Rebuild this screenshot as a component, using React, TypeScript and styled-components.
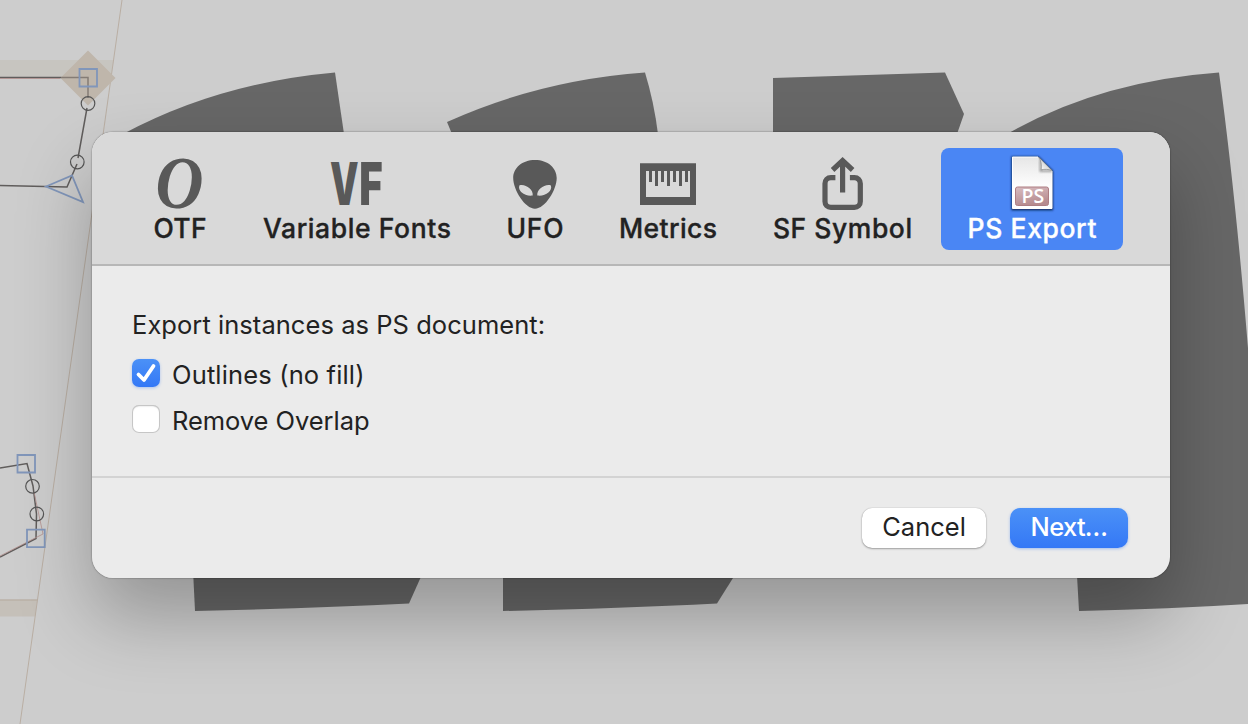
import React, { useState } from "react";
import styled, { createGlobalStyle, css } from "styled-components";

const GlobalStyle = createGlobalStyle`
  * { box-sizing: border-box; }
  body {
    margin: 0;
    overflow: hidden;
    background: #cdcdcd;
    font-family: Inter, "Liberation Sans", sans-serif;
    color: #222;
  }
  button { font: inherit; border: 0; padding: 0; background: none; color: inherit; }
`;

const Editor = styled.main`
  position: relative;
  width: 1248px;
  height: 724px;
  overflow: hidden;
  padding: 132px 78px 0 92px;
`;

const Canvas = styled.svg`
  position: absolute;
  inset: 0;
`;

const Sheet = styled.section`
  position: relative;
  display: flex;
  flex-direction: column;
  height: 446px;
  border-radius: 21px;
  overflow: hidden;
  background: #ebebeb;
`;

const SheetShadow = styled.div`
  border-radius: 21px;
  position: relative;
  box-shadow: 0 0 1.5px rgba(0, 0, 0, 0.65), 0 38px 74px rgba(0, 0, 0, 0.28);
`;

const Toolbar = styled.nav`
  display: flex;
  gap: 2px;
  height: 134px;
  padding: 16px 0 0 34px;
  background: #d9d9d9;
  border-bottom: 2px solid #b7b7b7;
`;

const ToolButton = styled.button<{ $width: number; $active: boolean }>`
  display: flex;
  flex-direction: column;
  align-items: center;
  flex: none;
  width: ${(p) => p.$width}px;
  height: 102px;
  padding-top: 4px;
  border-radius: 8px;
  ${(p) =>
    p.$active &&
    css`
      background: #4a86f4;
      color: #fff;
    `}
`;

const ToolIcon = styled.svg`
  display: block;
  flex: none;
  overflow: visible;
  fill: #595959;
`;

const ToolLabel = styled.span<{ $spacing: number }>`
  font-size: 26.5px;
  line-height: 33px;
  font-weight: 500;
  -webkit-text-stroke: 0.35px currentColor;
  white-space: nowrap;
  letter-spacing: ${(p) => p.$spacing}px;
  margin-right: ${(p) => -p.$spacing}px;
`;

const Options = styled.div`
  display: flex;
  flex-direction: column;
  height: 212px;
  padding: 43px 40px 0;
  border-bottom: 2px solid #d3d3d3;
`;

const Heading = styled.div`
  font-size: 25.5px;
  line-height: 32px;
  letter-spacing: 0.05px;
  margin-bottom: 18px;
  white-space: nowrap;
`;

const Option = styled.label<{ $spacing: number }>`
  display: flex;
  align-items: center;
  gap: 12px;
  height: 30px;
  margin-bottom: 16px;
  font-size: 25.5px;
  letter-spacing: ${(p) => p.$spacing}px;
`;

const CheckBox = styled.button<{ $checked: boolean }>`
  display: block;
  width: 28px;
  height: 28px;
  margin-top: -2px;
  border-radius: 7px;
  ${(p) =>
    p.$checked
      ? css`
          background: linear-gradient(#4b91f7, #3478f6);
          box-shadow: 0 1px 3px rgba(52, 120, 246, 0.35);
        `
      : css`
          background: #fff;
          box-shadow: inset 0 0 0 1px #c6c6c6, inset 0 1px 2px rgba(0, 0, 0, 0.2);
        `}
`;

const Footer = styled.footer`
  display: flex;
  justify-content: flex-end;
  gap: 24px;
  padding: 30px 42px 0 0;
`;

const PushButton = styled.button<{ $primary?: boolean }>`
  width: ${(p) => (p.$primary ? 118 : 124)}px;
  height: 40px;
  border-radius: 10px;
  font-size: 25.5px;
  line-height: 38px;
  padding-bottom: 2px;
  background: #fff;
  box-shadow: 0 0 1px rgba(0, 0, 0, 0.35), 0 1px 2px rgba(0, 0, 0, 0.3);
  ${(p) =>
    p.$primary &&
    css`
      color: #fff;
      font-weight: 500;
      letter-spacing: -0.7px;
      background: linear-gradient(#4b91f7, #3478f6);
      box-shadow: 0 1px 3px rgba(52, 120, 246, 0.4);
    `}
`;

const OtfIcon = () => (
  <ToolIcon width="64" height="60" viewBox="0 0 64 60">
    <text transform="translate(7.5 55.8) scale(0.91 1)" fontFamily="Liberation Serif, serif" fontWeight="700" fontStyle="italic" fontSize="73">O</text>
  </ToolIcon>
);

const VfIcon = () => (
  <ToolIcon width="64" height="60" viewBox="0 0 64 60" fontFamily="Inter, sans-serif" fontWeight="900" fontSize="59">
    <text transform="translate(5 53.3) scale(0.61 1)">V</text>
    <text transform="translate(34.2 53.3) scale(0.68 1)">F</text>
  </ToolIcon>
);

const UfoIcon = () => (
  <ToolIcon width="64" height="60" viewBox="0 0 64 60">
    <path
      fillRule="evenodd"
      d="M32 8C45 8 53.7 16 53.7 26C53.7 38 42 56.7 32 56.7C22 56.7 10.2 38 10.2 26C10.2 16 19 8 32 8ZM16.3 33.5C14.5 39 22 44.8 29.7 43.6C30.6 37.5 22 31.5 16.3 33.5ZM47.9 33.5C49.7 39 42.2 44.8 34.3 43.6C33.5 37.5 42.2 31.5 47.9 33.5Z"
    />
  </ToolIcon>
);

const MetricsIcon = () => (
  <ToolIcon width="64" height="60" viewBox="0 0 64 60">
    <path fillRule="evenodd" d="M4 11.3H60V53H4ZM10 19V45H54V19Z" />
    <path d="M13 19h3v11h-3zM19 19h3v15h-3zM25 19h3v11h-3zM31 19h3v15h-3zM37 19h3v11h-3zM43 19h3v15h-3zM49 19h3v11h-3z" />
  </ToolIcon>
);

const ShareIcon = () => (
  <ToolIcon width="64" height="60" viewBox="0 0 64 60">
    <g fill="none" stroke="#595959" strokeWidth="5.2" transform="translate(-0.6 0)">
      <path d="M25 25.7H20.5C17 25.7 14.6 28.1 14.6 31.6V49.5C14.6 53 17 55.4 20.5 55.4H44C47.5 55.4 49.9 53 49.9 49.5V31.6C49.9 28.1 47.5 25.7 44 25.7H39.5" />
      <path d="M32.2 40.5V8.5M22.2 18L32.2 8.5L42.2 18" />
    </g>
  </ToolIcon>
);

const PsIcon = () => (
  <ToolIcon width="64" height="60" viewBox="0 0 64 60">
    <defs>
      <linearGradient id="paper" x1="0" y1="0" x2="0" y2="1">
        <stop offset="0" stopColor="#e6e6e6" />
        <stop offset="0.6" stopColor="#fff" />
      </linearGradient>
      <linearGradient id="plate" x1="0" y1="0" x2="0.3" y2="1">
        <stop offset="0" stopColor="#d8bcc0" />
        <stop offset="1" stopColor="#b68b8f" />
      </linearGradient>
      <linearGradient id="fold" x1="0" y1="1" x2="1" y2="0">
        <stop offset="0.1" stopColor="#fff" />
        <stop offset="0.5" stopColor="#d8d8d8" />
      </linearGradient>
      <filter id="soft" x="-20%" y="-20%" width="140%" height="140%">
        <feGaussianBlur stdDeviation="0.9" />
      </filter>
    </defs>
    <path d="M11.5 4.5H38.5L53 19V58.3H11.5Z" fill="#0c2350" filter="url(#soft)" />
    <path d="M12.5 5H38L52 19V56.5H12.5Z" fill="url(#paper)" stroke="#fff" />
    <path d="M40.5 7.5V19H52" fill="none" stroke="#666" strokeWidth="2" opacity="0.6" filter="url(#soft)" />
    <path d="M38.5 5L52 18.5C48.5 17.2 44.5 17 41.2 17.8C41.8 13 41.2 8.5 38.5 5Z" fill="url(#fold)" stroke="#7b7b7b" strokeWidth="0.6" />
    <rect x="15.5" y="35" width="33" height="18.5" rx="2" fill="url(#plate)" stroke="#ae7e83" />
    <text x="32.8" y="51" textAnchor="middle" fill="#fff" fontFamily="Open Sans, sans-serif" fontWeight="600" fontSize="19.5">PS</text>
  </ToolIcon>
);

const TOOLS = [
  { label: "OTF", width: 108, spacing: 0.3, Icon: OtfIcon },
  { label: "Variable Fonts", width: 242, spacing: 0.6, Icon: VfIcon },
  { label: "UFO", width: 110, spacing: 0.7, Icon: UfoIcon },
  { label: "Metrics", width: 152, spacing: 0.4, Icon: MetricsIcon },
  { label: "SF Symbol", width: 193, spacing: 0.55, Icon: ShareIcon },
  { label: "PS Export", width: 182, spacing: 0.6, Icon: PsIcon },
];

const GlyphCanvas = () => (
  <Canvas width="1248" height="724" viewBox="0 0 1248 724">
    <path d="M0 60H113.5L111 77H0Z" fill="#c7c5c0" />
    <path d="M0 599.5H37.5L35 616.5H0Z" fill="#c5c0b9" />
    <path d="M0 600H37.5" stroke="#b5aa9e" />
    <path d="M122 0L20 724" stroke="#b9aea3" />
    <path d="M88 50.5L115.5 78L88 105.5L60.5 78Z" fill="#bfb6ab" />
    <g fill="#676767">
      <path d="M123 134Q218 83 335 72.5L344 134V200H123Z" />
      <path d="M452 134L447 122Q540 80 645 72.5Q654 102 658 134Z" />
      <path d="M773 134V78L945 72.5L964 114L957 134Z" />
      <path d="M1007 134Q1100 81 1219 72.5Q1235 190 1248 348V604Q1170 609 1079 611L1075 540Z" />
      <path d="M193 570L195 611Q310 608.5 409 603.5L424 570Z" />
      <path d="M503 570V611Q620 608.5 717 603.5L738 570Z" />
    </g>
    <g fill="none" stroke="#605d5c" strokeWidth="1.5">
      <path d="M0 77.5H61M77 164L67 187L0 185.5M87 108L78 158" />
      <path d="M0 468L27 463.5L33 486L36.5 514L36 538.5L0 557" />
    </g>
    <path d="M61 77.5H88V98" fill="none" stroke="#857c75" strokeWidth="1.5" />
    <g fill="none" stroke="#b28f8d" strokeWidth="0.8">
      <path d="M0 78.5H60M34 492L43 534L0 556" />
    </g>
    <g fill="none" stroke="#555" strokeWidth="1.2">
      <circle cx="88" cy="103.5" r="6.8" />
      <circle cx="77.3" cy="162" r="6.8" />
      <circle cx="32.5" cy="486.3" r="6.8" />
      <circle cx="36.8" cy="514" r="6.8" />
    </g>
    <g fill="none" stroke="#8196ba" strokeWidth="1.8">
      <path d="M79.5 69H97V86.5H79.5ZM17.5 455H35V472.5H17.5ZM27 529.7H44.7V547.2H27Z" />
      <path d="M46 186.5L72 175.5L83 202Z" />
    </g>
  </Canvas>
);

export default function App() {
  const [active, setActive] = useState("PS Export");
  const [outlines, setOutlines] = useState(true);
  const [overlap, setOverlap] = useState(false);
  return (
    <Editor>
      <GlobalStyle />
      <GlyphCanvas />
      <SheetShadow>
        <Sheet>
          <Toolbar>
            {TOOLS.map(({ label, width, spacing, Icon }) => (
              <ToolButton key={label} $width={width} $active={active === label} onClick={() => setActive(label)}>
                <Icon />
                <ToolLabel $spacing={spacing}>{label}</ToolLabel>
              </ToolButton>
            ))}
          </Toolbar>
          <Options>
            <Heading>Export instances as PS document:</Heading>
            <Option $spacing={0.15}>
              <CheckBox $checked={outlines} onClick={() => setOutlines(!outlines)}>
                {outlines && (
                  <svg width="28" height="28" viewBox="0 0 28 28" fill="none" stroke="#fff" strokeWidth="3.8" strokeLinecap="round" strokeLinejoin="round">
                    <path d="M6.5 15.5L12 21L21.5 7" />
                  </svg>
                )}
              </CheckBox>
              Outlines (no fill)
            </Option>
            <Option $spacing={-0.05}>
              <CheckBox $checked={overlap} onClick={() => setOverlap(!overlap)} />
              Remove Overlap
            </Option>
          </Options>
          <Footer>
            <PushButton>Cancel</PushButton>
            <PushButton $primary>Next…</PushButton>
          </Footer>
        </Sheet>
      </SheetShadow>
    </Editor>
  );
}
